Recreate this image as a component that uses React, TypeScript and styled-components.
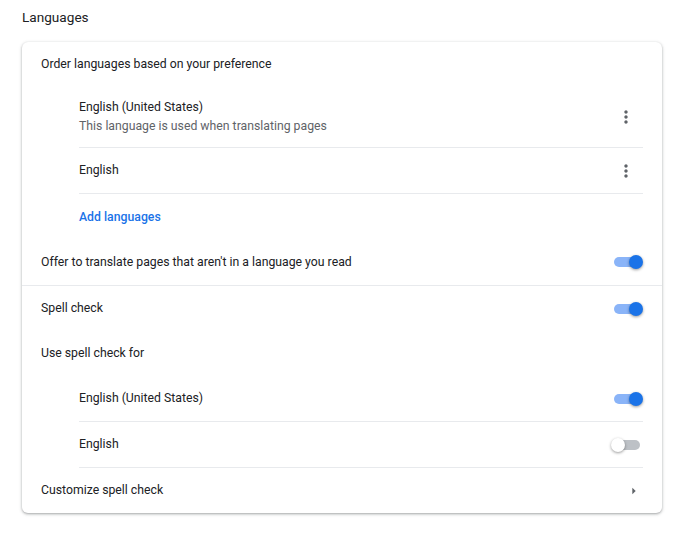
import React from "react";
import styled, { createGlobalStyle } from "styled-components";

const GlobalStyle = createGlobalStyle`
  html, body {
    margin: 0;
    padding: 0;
    background: #ffffff;
  }
  body {
    font-family: Roboto, "Liberation Sans", Arial, sans-serif;
    font-size: 12.25px;
    color: #202124;
    -webkit-font-smoothing: antialiased;
  }
`;

const Page = styled.div`
  padding: 0 20px 24px 22px;
`;

const SectionTitle = styled.h2`
  margin: 0 0 8px 0;
  height: 34px;
  line-height: 34px;
  font-size: 13.6px;
  font-weight: 400;
  color: #202124;
`;

const Card = styled.div`
  width: 640px;
  background: #fff;
  border-radius: 6px;
  box-shadow: 0 1px 2px 0 rgba(60, 64, 67, 0.3), 0 1px 3px 1px rgba(60, 64, 67, 0.15);
  overflow: hidden;
`;

const Row = styled.div<{ $border?: boolean; $height?: number }>`
  box-sizing: border-box;
  height: ${(p) => p.$height ?? 46}px;
  padding: 0 19px;
  display: flex;
  align-items: center;
  justify-content: space-between;
  border-top: ${(p) => (p.$border ? "1px solid #e8eaed" : "none")};
`;

const NestedList = styled.div<{ $closed?: boolean }>`
  padding: 0 19px 0 57px;

  & > div:last-child {
    border-bottom: ${(p) => (p.$closed ? "1px solid #e8eaed" : "none")};
  }
`;

const NestedItem = styled.div<{ $border?: boolean; $height?: number }>`
  box-sizing: border-box;
  height: ${(p) => p.$height ?? 46}px;
  display: flex;
  align-items: center;
  justify-content: space-between;
  border-top: ${(p) => (p.$border ? "1px solid #e8eaed" : "none")};
`;

const TextBlock = styled.div`
  display: flex;
  flex-direction: column;
`;

const Label = styled.span`
  font-size: 12.25px;
  line-height: 19px;
  color: #202124;
`;

const Secondary = styled.span`
  font-size: 12.25px;
  line-height: 19px;
  color: #5f6368;
`;

const LinkButton = styled.button`
  border: none;
  background: none;
  padding: 0;
  font-family: inherit;
  font-size: 12.25px;
  font-weight: 500;
  color: #1a73e8;
  cursor: pointer;
`;

const IconButton = styled.button`
  width: 36px;
  height: 36px;
  margin-right: -1px;
  border: none;
  background: none;
  padding: 0;
  display: flex;
  align-items: center;
  justify-content: center;
  color: #5f6368;
  cursor: pointer;
`;

const ToggleWrap = styled.div`
  position: relative;
  width: 32px;
  height: 14px;
  flex-shrink: 0;
`;

const ToggleTrack = styled.div<{ $on: boolean }>`
  position: absolute;
  left: 3px;
  top: 2px;
  width: 26px;
  height: 10px;
  border-radius: 5px;
  background: ${(p) => (p.$on ? "#8ab4f8" : "#bdc1c6")};
`;

const ToggleKnob = styled.div<{ $on: boolean }>`
  position: absolute;
  top: 0;
  left: ${(p) => (p.$on ? "18px" : "0")};
  width: 14px;
  height: 14px;
  border-radius: 50%;
  background: ${(p) => (p.$on ? "#1a73e8" : "#ffffff")};
  box-shadow: 0 1px 3px 0 rgba(0, 0, 0, 0.4);
`;

const ArrowBox = styled.div`
  width: 20px;
  height: 20px;
  margin-right: -1px;
  display: flex;
  color: #5f6368;
`;

const Toggle = ({ on }: { on: boolean }) => (
  <ToggleWrap>
    <ToggleTrack $on={on} />
    <ToggleKnob $on={on} />
  </ToggleWrap>
);

const MoreVert = () => (
  <IconButton aria-label="More actions">
    <svg width="20" height="20" viewBox="0 0 24 24" fill="currentColor">
      <path d="M12 8c1.1 0 2-.9 2-2s-.9-2-2-2-2 .9-2 2 .9 2 2 2zm0 2c-1.1 0-2 .9-2 2s.9 2 2 2 2-.9 2-2-.9-2-2-2zm0 6c-1.1 0-2 .9-2 2s.9 2 2 2 2-.9 2-2-.9-2-2-2z" />
    </svg>
  </IconButton>
);

const ArrowRight = () => (
  <ArrowBox>
    <svg width="20" height="20" viewBox="0 0 24 24" fill="currentColor">
      <path d="M10 16l4-4-4-4v8z" />
    </svg>
  </ArrowBox>
);

export default function App() {
  return (
    <Page>
      <GlobalStyle />
      <SectionTitle>Languages</SectionTitle>
      <Card>
        <Row $height={45}>
          <Label>Order languages based on your preference</Label>
        </Row>
        <NestedList>
          <NestedItem $height={60}>
            <TextBlock>
              <Label>English (United States)</Label>
              <Secondary>This language is used when translating pages</Secondary>
            </TextBlock>
            <MoreVert />
          </NestedItem>
          <NestedItem $border>
            <Label>English</Label>
            <MoreVert />
          </NestedItem>
          <NestedItem $border>
            <LinkButton>Add languages</LinkButton>
          </NestedItem>
        </NestedList>
        <Row>
          <Label>Offer to translate pages that aren't in a language you read</Label>
          <Toggle on />
        </Row>
        <Row $border>
          <Label>Spell check</Label>
          <Toggle on />
        </Row>
        <Row $height={45}>
          <Label>Use spell check for</Label>
        </Row>
        <NestedList $closed>
          <NestedItem $height={45}>
            <Label>English (United States)</Label>
            <Toggle on />
          </NestedItem>
          <NestedItem $border $height={47}>
            <Label>English</Label>
            <Toggle on={false} />
          </NestedItem>
        </NestedList>
        <Row $height={45}>
          <Label>Customize spell check</Label>
          <ArrowRight />
        </Row>
      </Card>
    </Page>
  );
}
